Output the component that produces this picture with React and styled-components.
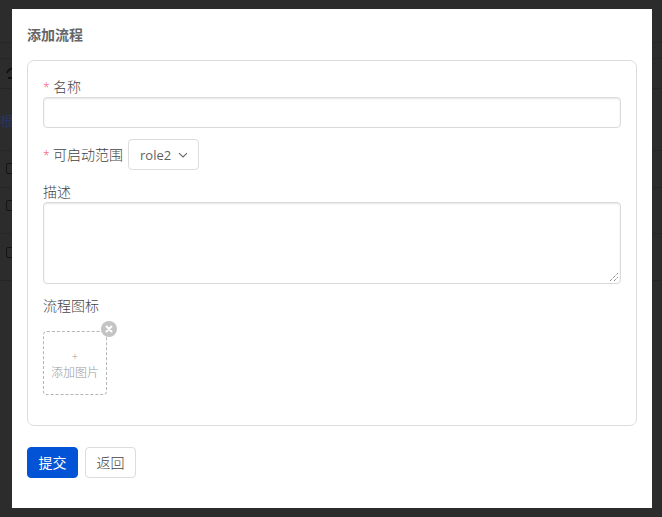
import React from "react";
import styled, { createGlobalStyle } from "styled-components";

const Global = createGlobalStyle`
  html, body { margin: 0; padding: 0; height: 517px; overflow: hidden; background: #2c2c2c; }
  * { box-sizing: border-box; }
`;
const font = `"Open Sans", "Noto Sans CJK SC", sans-serif`;

const Page = styled.div`
  position: relative;
  width: 662px;
  height: 517px;
  background: #2c2c2c;
  overflow: hidden;
  font-family: ${font};
  display: flex;
  flex-direction: column;
`;
const BackRow = styled.div`
  height: ${(p) => p.$h}px;
  flex: none;
  border-bottom: 1px solid #262626;
  padding: ${(p) => p.$pad || 0}px 0 0 ${(p) => p.$left ?? 6}px;
`;
const BackCheck = styled.div`
  width: 10px;
  height: 11px;
  border: 1px solid #141414;
  border-radius: 2px;
`;
const BackLink = styled.div`
  font-size: 14px;
  line-height: 18px;
  color: #2a3560;
`;
const Modal = styled.div`
  position: absolute;
  left: 12px;
  top: 9px;
  width: 640px;
  height: 499px;
  background: #fff;
  padding: 17px 15px 0;
  display: flex;
  flex-direction: column;
`;
const Title = styled.h2`
  margin: 0 0 16px;
  font-size: 14px;
  line-height: 18px;
  font-weight: 700;
  color: #666;
`;
const Card = styled.div`
  height: 366px;
  border: 1px solid #dcdcdc;
  border-radius: 7px;
  padding: 16px 15px 0;
  display: flex;
  flex-direction: column;
`;
const Label = styled.label`
  display: block;
  height: 20px;
  font-size: 14px;
  line-height: 20px;
  font-weight: 300;
  color: #444;
  white-space: nowrap;
`;
const Star = styled.span`
  display: inline-block;
  width: 10px;
  font-size: 12px;
  line-height: 1;
  color: #f5587b;
`;
const TextInput = styled.div`
  height: 31px;
  border: 1px solid #dadada;
  border-radius: 4px;
  box-shadow: inset 0 1px 2px rgba(0, 0, 0, 0.1);
  background: #fff;
`;
const ScopeRow = styled.div`
  display: flex;
  align-items: center;
  gap: 5px;
  margin-top: 11px;
`;
const Select = styled.div`
  width: 71px;
  height: 31px;
  border: 1px solid #dcdcdc;
  border-radius: 4px;
  display: flex;
  align-items: center;
  justify-content: space-between;
  padding: 0 10px 0 11px;
  font-size: 13px;
  color: #5f5f5f;
`;
const DescLabel = styled(Label)`
  height: 15px;
  margin-top: 14px;
  line-height: 15px;
`;
const TextArea = styled.div`
  position: relative;
  height: 82px;
  margin-top: 3px;
  border: 1px solid #dadada;
  border-radius: 4px;
  box-shadow: inset 0 1px 2px rgba(0, 0, 0, 0.1);
`;
const Grip = styled.svg`
  position: absolute;
  right: 1px;
  bottom: 1px;
`;
const IconLabel = styled(Label)`
  margin-top: 12px;
`;
const Upload = styled.div`
  position: relative;
  width: 64px;
  height: 64px;
  margin-top: 15px;
  border: 1px dashed #b5b5b5;
  border-radius: 4px;
  display: flex;
  flex-direction: column;
  align-items: center;
  justify-content: center;
  color: #999;
  font-size: 12px;
  font-weight: 300;
  line-height: 16px;
`;
const Plus = styled.span`
  font-size: 11px;
  line-height: 14px;
  margin: 4px 0 2px;
`;
const Close = styled.span`
  position: absolute;
  right: -11px;
  top: -11px;
  width: 16px;
  height: 16px;
  border-radius: 50%;
  background: #c4c4c4;
  display: flex;
  align-items: center;
  justify-content: center;
`;
const Actions = styled.div`
  display: flex;
  gap: 7px;
  margin-top: 21px;
`;
const Button = styled.button`
  width: 51px;
  height: 31px;
  padding: 0 0 2px;
  border-radius: 4px;
  border: 1px solid ${(p) => (p.$primary ? "#0353d6" : "#dcdcdc")};
  background: ${(p) => (p.$primary ? "#0353d6" : "#fff")};
  color: ${(p) => (p.$primary ? "#fff" : "#444")};
  font-family: ${font};
  font-size: 14px;
  font-weight: ${(p) => (p.$primary ? 400 : 300)};
`;

export default function App() {
  return (
    <Page>
      <Global />
      <BackRow $h={43} />
      <BackRow $h={16} />
      <BackRow $h={30} $pad={8}>
        <svg width="8" height="14" viewBox="0 0 8 14" fill="none" stroke="#111" strokeWidth="2" style={{ display: "block" }}>
          <path d="M7 2 A5 5 0 0 0 1 6 M7 11 L2 11" />
        </svg>
      </BackRow>
      <BackRow $h={62} $pad={23} $left={0}>
        <BackLink>根</BackLink>
      </BackRow>
      <BackRow $h={37} $pad={12}><BackCheck /></BackRow>
      <BackRow $h={46} $pad={12}><BackCheck /></BackRow>
      <BackRow $h={47} $pad={13}><BackCheck /></BackRow>
      <Modal>
        <Title>添加流程</Title>
        <Card>
          <Label><Star>*</Star>名称</Label>
          <TextInput />
          <ScopeRow>
            <Label><Star>*</Star>可启动范围</Label>
            <Select>
              role2
              <svg width="10" height="10" viewBox="0 0 10 10" fill="none" stroke="#666" strokeWidth="1.1">
                <path d="M1 3.2 L5 7 L9 3.2" />
              </svg>
            </Select>
          </ScopeRow>
          <DescLabel>描述</DescLabel>
          <TextArea>
            <Grip width="10" height="10" viewBox="0 0 10 10" stroke="#555" strokeWidth="1" strokeDasharray="1 1">
              <path d="M1 9 L9 1 M5 9 L9 5" />
            </Grip>
          </TextArea>
          <IconLabel>流程图标</IconLabel>
          <Upload>
            <Plus>+</Plus>
            添加图片
            <Close>
              <svg width="8" height="8" viewBox="0 0 8 8" stroke="#fff" strokeWidth="2" strokeLinecap="round">
                <path d="M1.5 1.5 L6.5 6.5 M6.5 1.5 L1.5 6.5" />
              </svg>
            </Close>
          </Upload>
        </Card>
        <Actions>
          <Button $primary>提交</Button>
          <Button>返回</Button>
        </Actions>
      </Modal>
    </Page>
  );
}
